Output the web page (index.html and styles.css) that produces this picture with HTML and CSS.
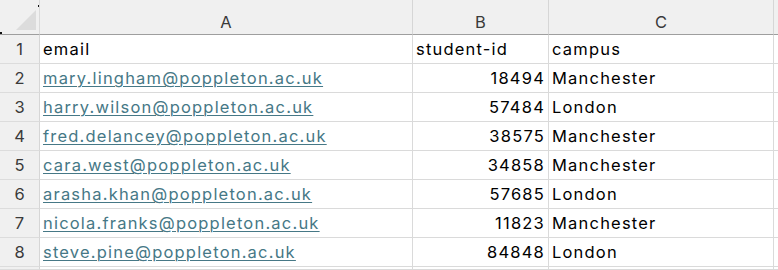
FILE: index.html
```html
<!DOCTYPE html>
<html lang="en">
<head>
<meta charset="utf-8">
<title>Sheet</title>
<link rel="stylesheet" href="styles.css">
</head>
<body>
<div class="sheet">
  <div class="corner"><span class="tri"></span></div>
  <div class="colhead">A</div>
  <div class="colhead">B</div>
  <div class="colhead">C</div>
  <div class="colhead edge"></div>

  <div class="rowhead">1</div>
  <div class="cell">email</div>
  <div class="cell">student-id</div>
  <div class="cell">campus</div>
  <div class="cell edge"></div>

  <div class="rowhead">2</div>
  <div class="cell"><a class="link" href="#">mary.lingham@poppleton.ac.uk</a></div>
  <div class="cell num">18494</div>
  <div class="cell">Manchester</div>
  <div class="cell edge"></div>

  <div class="rowhead">3</div>
  <div class="cell"><a class="link" href="#">harry.wilson@poppleton.ac.uk</a></div>
  <div class="cell num">57484</div>
  <div class="cell">London</div>
  <div class="cell edge"></div>

  <div class="rowhead">4</div>
  <div class="cell"><a class="link" href="#">fred.delancey@poppleton.ac.uk</a></div>
  <div class="cell num">38575</div>
  <div class="cell">Manchester</div>
  <div class="cell edge"></div>

  <div class="rowhead">5</div>
  <div class="cell"><a class="link" href="#">cara.west@poppleton.ac.uk</a></div>
  <div class="cell num">34858</div>
  <div class="cell">Manchester</div>
  <div class="cell edge"></div>

  <div class="rowhead">6</div>
  <div class="cell"><a class="link" href="#">arasha.khan@poppleton.ac.uk</a></div>
  <div class="cell num">57685</div>
  <div class="cell">London</div>
  <div class="cell edge"></div>

  <div class="rowhead">7</div>
  <div class="cell"><a class="link" href="#">nicola.franks@poppleton.ac.uk</a></div>
  <div class="cell num">11823</div>
  <div class="cell">Manchester</div>
  <div class="cell edge"></div>

  <div class="rowhead">8</div>
  <div class="cell"><a class="link" href="#">steve.pine@poppleton.ac.uk</a></div>
  <div class="cell num">84848</div>
  <div class="cell">London</div>
  <div class="cell edge"></div>

  <div class="rowhead"></div>
  <div class="cell"></div>
  <div class="cell"></div>
  <div class="cell"></div>
  <div class="cell edge"></div>
</div>
</body>
</html>
```
FILE: styles.css
```css
html, body {
  margin: 0;
  padding: 0;
  background: #ffffff;
}

.sheet {
  display: grid;
  grid-template-columns: 40px 373px 136px 225px 1fr;
  grid-template-rows: 35px repeat(8, 29px) 1fr;
  width: 778px;
  height: 270px;
  overflow: hidden;
  font-family: "Inter", "Noto Sans", sans-serif;
  font-size: 16.5px;
  letter-spacing: 1.2px;
  color: #000000;
}

.sheet > div {
  box-sizing: border-box;
  border-right: 1px solid #dadada;
  border-bottom: 1px solid #dadada;
  white-space: nowrap;
  overflow: hidden;
}

.corner {
  background: #f0f0f0;
  border-bottom-color: #9e9e9e !important;
  position: relative;
}

.tri {
  position: absolute;
  left: 16px;
  top: 10px;
  width: 20px;
  height: 20px;
  background: #dcdcdc;
  clip-path: polygon(100% 0, 100% 100%, 0 100%);
}

.corner::before,
.corner::after {
  content: "";
  position: absolute;
  width: 2px;
  height: 2px;
  background: #111111;
}

.corner::before {
  right: -1px;
  top: 5px;
  z-index: 2;
}

.corner::after {
  left: 0;
  bottom: 0;
}

.colhead {
  background: #f0f0f0;
  border-bottom-color: #9e9e9e !important;
  border-right-color: #d6d6d6 !important;
  text-align: center;
  color: #3a3a3a;
  line-height: 26px;
  padding-top: 9px;
  letter-spacing: 0;
}

.rowhead {
  background: #f0f0f0;
  border-right-color: #d6d6d6 !important;
  border-bottom-color: #dcdcdc !important;
  text-align: center;
  color: #3a3a3a;
  line-height: 26px;
  padding-top: 1px;
  letter-spacing: 0;
}

.cell {
  background: #ffffff;
  line-height: 26px;
  padding: 1px 3px 0 3px;
}

.num {
  text-align: right;
}

.edge {
  border-right: none !important;
  padding: 0;
}

.link {
  color: #467886;
  text-decoration: underline;
  text-decoration-thickness: 1px;
  text-underline-offset: 2px;
}
```
